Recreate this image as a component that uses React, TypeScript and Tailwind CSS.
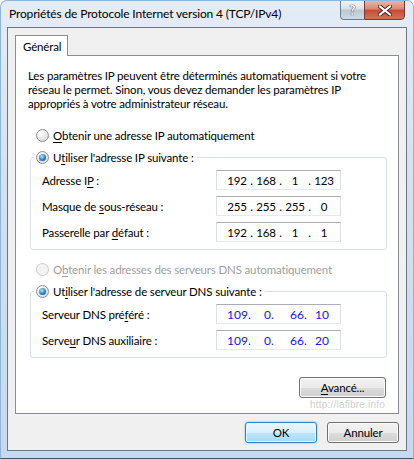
import type { ReactNode } from 'react';

type RadioProps = { checked?: boolean; disabled?: boolean };

function Radio({ checked, disabled }: RadioProps) {
  return (
    <span
      className={
        disabled
          ? 'flex h-[13px] w-[13px] shrink-0 items-center justify-center rounded-full border border-[#cacaca] bg-[#f3f3f3]'
          : 'flex h-[13px] w-[13px] shrink-0 items-center justify-center rounded-full border border-[#8e8f8f] bg-[radial-gradient(circle_at_35%_30%,#ffffff,#dcdcdc_80%)]'
      }>
      {checked && (
        <span className="h-[7px] w-[7px] rounded-full bg-[radial-gradient(circle_at_40%_35%,#b4e6ff,#2a7fcc_55%,#0b3f78)]" />
      )}
    </span>
  );
}

function RadioRow({ checked, disabled, children }: RadioProps & { children: ReactNode }) {
  return (
    <div
      className={`flex h-[15px] items-center gap-[4px] whitespace-nowrap ${disabled ? 'text-[#a0a0a0]' : 'text-black'}`}>
      <Radio checked={checked} disabled={disabled} />
      <span>{children}</span>
    </div>
  );
}

const Acc = ({ children }: { children: ReactNode }) => (
  <span className="underline decoration-1 underline-offset-[2px]">{children}</span>
);

function IpBox({ parts }: { parts: string[] }) {
  return (
    <div className="flex h-[20px] w-[125px] items-center border border-[#abadb3] border-x-[#dbdfe6] border-b-[#e3e9ef] bg-white pl-[9px]">
      {parts.map((p, i) => (
        <div key={i} className="flex">
          <span className="w-[22px] text-center">{p}</span>
          {i < 3 && <span className="w-[7px] text-center">.</span>}
        </div>
      ))}
    </div>
  );
}

// the DNS boxes in the shot use blue, right-aligned fields
function DnsBox({ parts }: { parts: string[] }) {
  return (
    <div className="flex h-[20px] w-[125px] items-center border border-[#abadb3] border-x-[#dbdfe6] border-b-[#e3e9ef] bg-white pl-[8px] text-[12px] tracking-normal text-[#1515f0]">
      <span className="w-[23px] text-right">{parts[0]}</span>
      <span className="w-[5px]">.</span>
      <span className="w-[18px] text-right">{parts[1]}</span>
      <span className="w-[5px]">.</span>
      <span className="w-[28px] text-right">{parts[2]}</span>
      <span className="w-[5px]">.</span>
      <span className="w-[20px] text-right">{parts[3]}</span>
    </div>
  );
}

function FieldRow({ label, children }: { label: ReactNode; children: ReactNode }) {
  return (
    <div className="flex h-[20px] items-center">
      <span className="w-[174px] whitespace-nowrap">{label}</span>
      {children}
    </div>
  );
}

function Group({ legend, children }: { legend: ReactNode; children: ReactNode }) {
  return (
    <fieldset className="ml-[14px] mr-[11px] rounded-[3px] border border-[#d5dfe5] px-[3px]">
      <legend className="px-[2px] pr-[3px]">{legend}</legend>
      <div className="flex flex-col gap-[6px] pb-[7px] pl-[8px] pt-[5px]">{children}</div>
    </fieldset>
  );
}

export default function App() {
  return (
    <div className="flex h-[459px] w-[414px] flex-col overflow-hidden rounded-t-[7px] border border-[#8fb6d8] border-b-[#3f5267] bg-[linear-gradient(180deg,#e4ecf6_0%,#d3e1f0_40%,#c6d9ee_100%)] px-[6px] pb-[7px] font-['Lato',sans-serif] text-[11.5px] leading-[15px] tracking-[-0.15px] text-black">
      {/* title bar */}
      <div className="flex h-[26px] shrink-0 items-start justify-between">
        <span className="pl-[2px] pt-[5px] text-[12px] whitespace-nowrap">
          Propriétés de Protocole Internet version 4 (TCP/IPv4)
        </span>
        <div className="-mt-px mr-[2px] flex">
          <div className="flex h-[20px] w-[24px] items-center justify-center rounded-bl-[4px] border border-r-0 border-[#6d7f93] bg-[linear-gradient(180deg,#eef3f8_0%,#d8e1ea_45%,#b9c6d3_50%,#cfdbe6_100%)] text-[13px] font-bold text-[#f4f7fa] [text-shadow:0_0_1px_#3b4a5a,0_0_1px_#3b4a5a]">
            ?
          </div>
          <div className="flex h-[20px] w-[41px] items-center justify-center rounded-br-[4px] border border-[#7a3a32] bg-[linear-gradient(180deg,#eab3a8_0%,#d98776_45%,#c64a33_50%,#d4725a_100%)]">
            <svg width="14" height="11" viewBox="0 0 14 11">
              <path d="M2 1.5 L12 9.5 M12 1.5 L2 9.5" stroke="#4a1d18" strokeWidth="4" strokeLinecap="square" />
              <path d="M2 1.5 L12 9.5 M12 1.5 L2 9.5" stroke="#ffffff" strokeWidth="2.2" strokeLinecap="square" />
            </svg>
          </div>
        </div>
      </div>

      {/* client area */}
      <div className="flex flex-1 flex-col border border-[#6d7683] bg-[#f0f0f0] px-[7px] pt-[7px]">
        <div className="relative z-10 -mb-px flex h-[21px] w-[53px] items-center border border-b-0 border-[#898c95] bg-white pl-[7px]">
          Général
        </div>
        <div className="flex h-[359px] flex-col border border-[#898c95] bg-white pt-[13px]">
          <p className="ml-[12px] whitespace-nowrap leading-[14px]">
            Les paramètres IP peuvent être déterminés automatiquement si votre
            <br />
            réseau le permet. Sinon, vous devez demander les paramètres IP
            <br />
            appropriés à votre administrateur réseau.
          </p>

          <div className="ml-[20px] mt-[17px]">
            <RadioRow>
              <Acc>O</Acc>btenir une adresse IP automatiquement
            </RadioRow>
          </div>

          <div className="mt-[7px]">
            <Group
              legend={
                <RadioRow checked>
                  U<Acc>t</Acc>iliser l'adresse IP suivante :
                </RadioRow>
              }>
              <FieldRow
                label={
                  <>
                    Adresse I<Acc>P</Acc> :
                  </>
                }>
                <IpBox parts={['192', '168', '1', '123']} />
              </FieldRow>
              <FieldRow
                label={
                  <>
                    Masque de <Acc>s</Acc>ous-réseau :
                  </>
                }>
                <IpBox parts={['255', '255', '255', '0']} />
              </FieldRow>
              <FieldRow
                label={
                  <>
                    Passerelle par <Acc>d</Acc>éfaut :
                  </>
                }>
                <IpBox parts={['192', '168', '1', '1']} />
              </FieldRow>
            </Group>
          </div>

          <div className="ml-[20px] mt-[12px]">
            <RadioRow disabled>
              O<Acc>b</Acc>tenir les adresses des serveurs DNS automatiquement
            </RadioRow>
          </div>

          <div className="mt-[7px]">
            <Group
              legend={
                <RadioRow checked>
                  Ut<Acc>i</Acc>liser l'adresse de serveur DNS suivante :
                </RadioRow>
              }>
              <FieldRow
                label={
                  <>
                    Serveur DNS pré<Acc>f</Acc>éré :
                  </>
                }>
                <DnsBox parts={['109', '0', '66', '10']} />
              </FieldRow>
              <FieldRow
                label={
                  <>
                    Serve<Acc>u</Acc>r DNS auxiliaire :
                  </>
                }>
                <DnsBox parts={['109', '0', '66', '20']} />
              </FieldRow>
            </Group>
          </div>

          <div className="mr-[12px] mt-[19px] flex flex-col items-end">
            <button
              type="button"
              className="flex h-[21px] w-[87px] items-center justify-center rounded-[3px] border border-[#707070] bg-[linear-gradient(180deg,#f2f2f2_0%,#ebebeb_50%,#dddddd_50%,#cfcfcf_100%)] shadow-[inset_0_0_0_1px_#fcfcfc]">
              <span>
                <Acc>A</Acc>vancé...
              </span>
            </button>
            <span className="mr-[1px] mt-[1px] font-['Liberation_Sans',sans-serif] text-[10px] leading-[12px] tracking-[0.2px] text-[#cfcfcf]">
              http://lafibre.info
            </span>
          </div>
        </div>

        <div className="mt-[8px] flex justify-end gap-[10px]">
          <button
            type="button"
            className="flex h-[21px] w-[72px] items-center justify-center rounded-[3px] border border-[#3c7fb1] bg-[linear-gradient(180deg,#eaf6fd_0%,#d9f0fc_50%,#bee6fd_50%,#a7d9f5_100%)] shadow-[inset_0_0_0_1px_#e3f4fc,0_0_2px_#5fb4e8]">
            OK
          </button>
          <button
            type="button"
            className="flex h-[21px] w-[72px] items-center justify-center rounded-[3px] border border-[#707070] bg-[linear-gradient(180deg,#f2f2f2_0%,#ebebeb_50%,#dddddd_50%,#cfcfcf_100%)] shadow-[inset_0_0_0_1px_#fcfcfc]">
            Annuler
          </button>
        </div>
      </div>
    </div>
  );
}
